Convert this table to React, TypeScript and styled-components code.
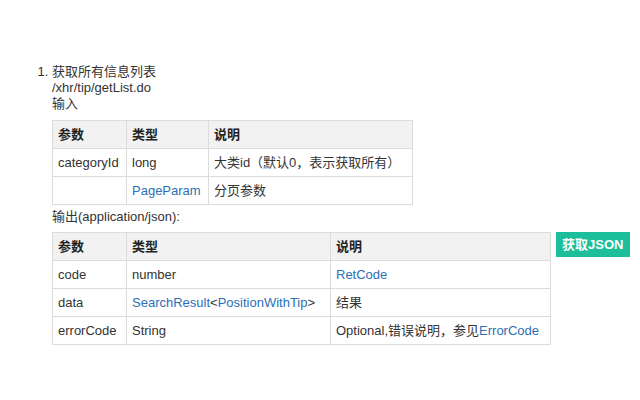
import React from "react";
import styled, { createGlobalStyle } from "styled-components";

const Global = createGlobalStyle`
  html, body { margin: 0; padding: 0; background: #fff; }
  body {
    font-family: "Liberation Sans", Arial, "Noto Sans CJK SC", sans-serif;
    font-size: 13px;
    line-height: 16px;
    color: #333;
  }
`;

const List = styled.ol`
  margin: 0;
  padding: 64px 0 0 52px;
`;

const Item = styled.li``;

const Line = styled.div``;

const Table = styled.table<{ $mt?: number; $mb?: number }>`
  border-collapse: collapse;
  margin: ${(p) => `${p.$mt ?? 8}px 0 ${p.$mb ?? 4}px 0`};
  font-size: 13px;
  line-height: 15px;
`;

const Th = styled.th<{ $w?: number }>`
  background: #f2f2f2;
  border: 1px solid #dcdcdc;
  padding: 6px 6px 6px 5px;
  text-align: left;
  font-weight: bold;
  color: #222;
  width: ${(p) => (p.$w ? `${p.$w}px` : "auto")};
  box-sizing: border-box;
  height: 28px;
`;

const Td = styled.td`
  border: 1px solid #dcdcdc;
  padding: 6px 6px 6px 5px;
  text-align: left;
  color: #333;
  height: 28px;
  box-sizing: border-box;
  white-space: nowrap;
`;

const Link = styled.span`
  color: #2b6fb6;
`;

const OutRow = styled.div`
  display: flex;
  align-items: flex-start;
  gap: 5px;
  margin-top: 7px;
`;

const JsonButton = styled.div`
  background: #1cbf99;
  color: #fff;
  font-weight: bold;
  font-size: 13px;
  line-height: 25px;
  height: 25px;
  padding: 0 7px 0 6px;
  white-space: nowrap;
`;

export default function App() {
  return (
    <>
      <Global />
      <List>
        <Item>
          <Line>获取所有信息列表</Line>
          <Line>/xhr/tip/getList.do</Line>
          <Line>输入</Line>
          <Table $mt={8} $mb={4}>
            <thead>
              <tr>
                <Th $w={74}>参数</Th>
                <Th $w={82}>类型</Th>
                <Th $w={204}>说明</Th>
              </tr>
            </thead>
            <tbody>
              <tr>
                <Td>categoryId</Td>
                <Td>long</Td>
                <Td>大类id（默认0，表示获取所有）</Td>
              </tr>
              <tr>
                <Td></Td>
                <Td>
                  <Link>PageParam</Link>
                </Td>
                <Td>分页参数</Td>
              </tr>
            </tbody>
          </Table>
          <Line>输出(application/json):</Line>
          <OutRow>
            <Table $mt={0} $mb={0}>
              <thead>
                <tr>
                  <Th $w={74}>参数</Th>
                  <Th $w={204}>类型</Th>
                  <Th $w={220}>说明</Th>
                </tr>
              </thead>
              <tbody>
                <tr>
                  <Td>code</Td>
                  <Td>number</Td>
                  <Td>
                    <Link>RetCode</Link>
                  </Td>
                </tr>
                <tr>
                  <Td>data</Td>
                  <Td>
                    <Link>SearchResult</Link>&lt;<Link>PositionWithTip</Link>&gt;
                  </Td>
                  <Td>结果</Td>
                </tr>
                <tr>
                  <Td>errorCode</Td>
                  <Td>String</Td>
                  <Td>
                    Optional,错误说明，参见<Link>ErrorCode</Link>
                  </Td>
                </tr>
              </tbody>
            </Table>
            <JsonButton>获取JSON</JsonButton>
          </OutRow>
        </Item>
      </List>
    </>
  );
}
